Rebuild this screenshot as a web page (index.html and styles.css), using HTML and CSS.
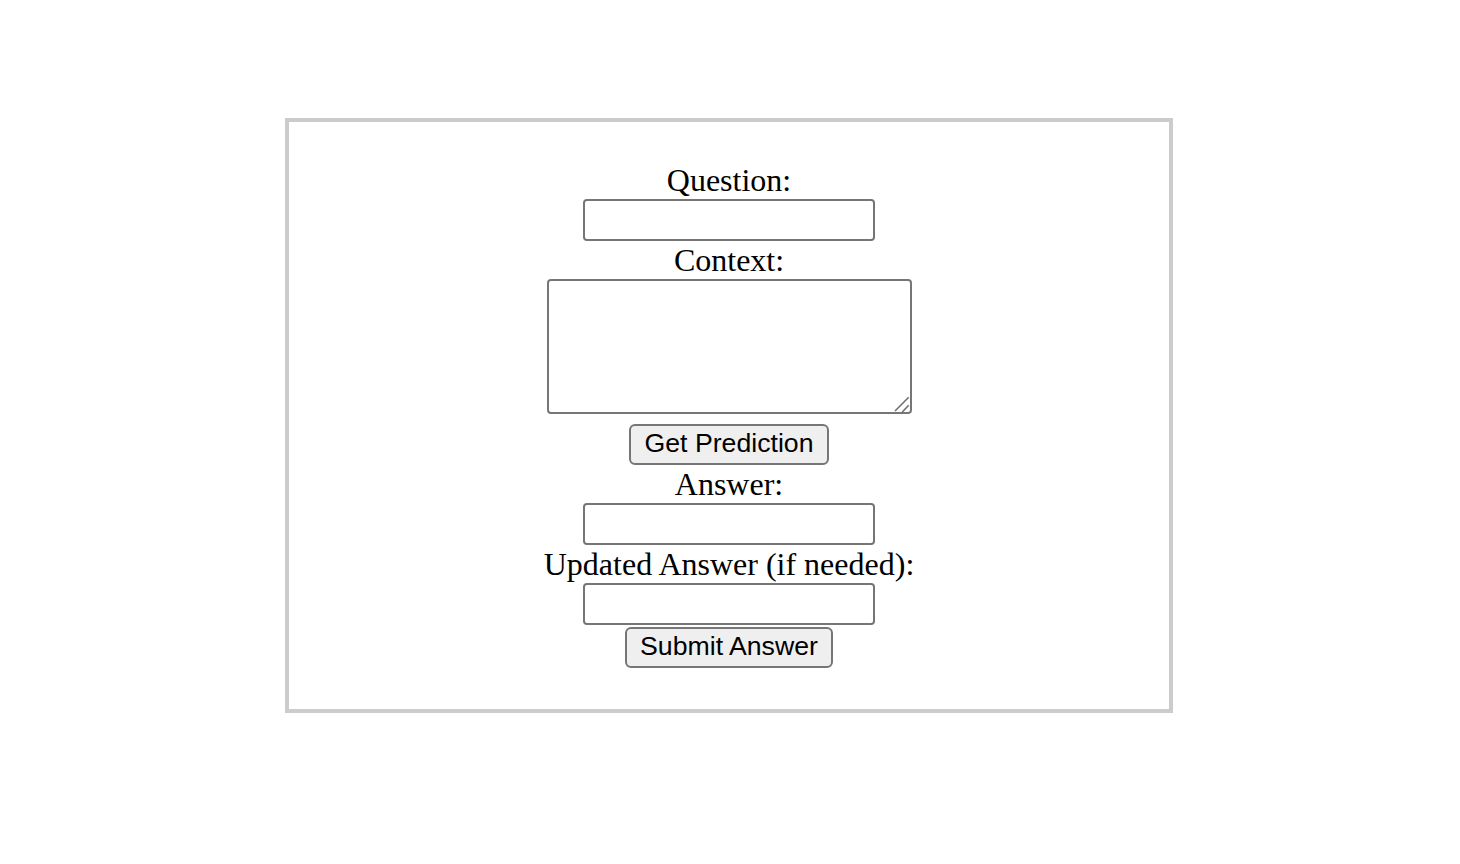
FILE: index.html
```html
<!DOCTYPE html>
<html lang="en">
<head>
<meta charset="utf-8">
<title>QA Feedback</title>
<link rel="stylesheet" href="styles.css">
</head>
<body>
<div class="box">
  <form class="form">
    <label class="label label-first" for="question">Question:</label>
    <input class="field" type="text" id="question">
    <label class="label" for="context">Context:</label>
    <div class="area-wrap">
      <textarea class="area" id="context"></textarea>
      <svg class="grip" width="20" height="20" viewBox="0 0 20 20" aria-hidden="true">
        <line x1="3" y1="17" x2="16.7" y2="3.3" stroke="#6f6f6f" stroke-width="1.6"/>
        <line x1="10.3" y1="18" x2="16.7" y2="11.3" stroke="#6f6f6f" stroke-width="1.6"/>
      </svg>
    </div>
    <button class="btn btn-predict" type="button">Get Prediction</button>
    <label class="label" for="answer">Answer:</label>
    <input class="field" type="text" id="answer">
    <label class="label" for="updated">Updated Answer (if needed):</label>
    <input class="field" type="text" id="updated">
    <button class="btn btn-submit" type="button">Submit Answer</button>
  </form>
</div>
</body>
</html>
```

FILE: styles.css
```css
html, body {
  margin: 0;
  padding: 0;
  background: #ffffff;
}

body {
  font-family: "Liberation Serif", "Times New Roman", serif;
  font-size: 32px;
  color: #000000;
}

.box {
  width: 800px;
  padding: 40px 40px 41px 40px;
  border: 4px solid #cccccc;
  margin: 118px 0 0 285px;
}

.form {
  display: flex;
  flex-direction: column;
  align-items: center;
  margin: 0;
}

.label {
  display: block;
  height: 38px;
  line-height: 38px;
  white-space: nowrap;
}

.label-first {
  height: 37px;
  line-height: 37px;
}

.field {
  box-sizing: border-box;
  width: 292px;
  height: 42px;
  margin: 0;
  padding: 2px 4px;
  border: 2px solid #767676;
  border-radius: 4px;
  background: #ffffff;
  font-family: "Liberation Sans", Arial, sans-serif;
  font-size: 26px;
}

.area-wrap {
  position: relative;
  width: 365px;
  height: 135px;
}

.area {
  box-sizing: border-box;
  display: block;
  width: 365px;
  height: 135px;
  margin: 0;
  padding: 4px;
  border: 2px solid #767676;
  border-radius: 4px;
  background: #ffffff;
  font-family: "Liberation Mono", monospace;
  font-size: 26px;
  resize: none;
}

.grip {
  position: absolute;
  right: 0;
  bottom: 0;
  pointer-events: none;
}

.btn {
  box-sizing: border-box;
  height: 41px;
  margin: 0;
  padding: 0 13.5px 2px 13.5px;
  border: 2px solid #767676;
  border-radius: 6px;
  background: #efefef;
  color: #000000;
  font-family: "Liberation Sans", Arial, sans-serif;
  font-size: 26.67px;
  line-height: 35px;
  white-space: nowrap;
}

.btn-predict {
  margin-top: 10px;
}

.btn-submit {
  margin-top: 2px;
}
```
